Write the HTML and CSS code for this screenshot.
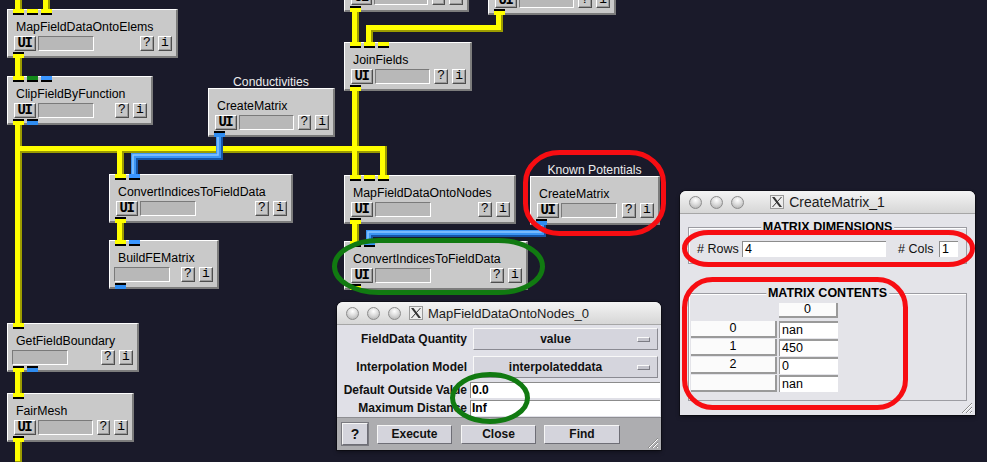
FILE: index.html
```html
<!DOCTYPE html>
<html>
<head>
<meta charset="utf-8">
<title>SCIRun network</title>
<link rel="stylesheet" href="styles.css">
</head>
<body>
<div class="canvas">
  <svg class="wires" width="987" height="462" viewBox="0 0 987 462">
    <path class="w-yd" d="M18.5 0V11 M46.5 0V11 M18.5 56V78 M18.5 123V325 M18.5 149.5H383.5V177 M120.5 149.5V176 M120.5 221V242 M18.5 370V395 M18.5 441V462 M355.5 10V44 M499.5 13V28.5H369.5V44 M355.5 88V177 M355.5 222V243"/>
    <path class="w-yl" d="M18.5 0V11 M46.5 0V11 M18.5 56V78 M18.5 123V325 M18.5 149.5H383.5V177 M120.5 149.5V176 M120.5 221V242 M18.5 370V395 M18.5 441V462 M355.5 10V44 M499.5 13V28.5H369.5V44 M355.5 88V177 M355.5 222V243"/>
    <path class="w-bd" d="M219.5 135V156.5H134.5V176 M542.5 223V233.5H369.5V243"/>
    <path class="w-bl" d="M219.5 135V156.5H134.5V176 M542.5 223V233.5H369.5V243"/>
    <path class="w-bc" d="M219.5 135V156.5H134.5V176 M542.5 223V233.5H369.5V243"/>
  </svg>

  <!-- partially visible modules at top -->
  <div class="mod m-n1">
    <div class="title">&nbsp;</div>
    <div class="row"><span class="ui">UI</span><span class="bar"></span><span class="sp"></span><span class="mb">?</span><span class="mb">i</span></div>
    <span class="port out p1 yel"></span>
  </div>
  <div class="mod m-n2">
    <div class="title">&nbsp;</div>
    <div class="row"><span class="ui">UI</span><span class="bar"></span><span class="sp"></span><span class="mb">?</span><span class="mb">i</span></div>
    <span class="port out p1 yel"></span>
  </div>

  <div class="mod m-elems">
    <span class="port in p1 yel"></span><span class="port in p2 yel"></span><span class="port in p3 yel"></span>
    <div class="title">MapFieldDataOntoElems</div>
    <div class="row"><span class="ui">UI</span><span class="bar"></span><span class="sp"></span><span class="mb">?</span><span class="mb">i</span></div>
    <span class="port out p1 yel"></span>
  </div>

  <div class="mod m-clip">
    <span class="port in p1 yel"></span><span class="port in p2 grn"></span><span class="port in p3 blu"></span>
    <div class="title">ClipFieldByFunction</div>
    <div class="row"><span class="ui">UI</span><span class="bar"></span><span class="sp"></span><span class="mb">?</span><span class="mb">i</span></div>
    <span class="port out p1 yel"></span><span class="port out p2 blu"></span>
  </div>

  <div class="mod m-cond">
    <div class="cap">Conductivities</div>
    <div class="title">CreateMatrix</div>
    <div class="row"><span class="ui">UI</span><span class="bar"></span><span class="sp"></span><span class="mb">?</span><span class="mb">i</span></div>
    <span class="port out p1 blu"></span>
  </div>

  <div class="mod m-join">
    <span class="port in p1 yel"></span><span class="port in p2 yel"></span><span class="port in p3 yel"></span>
    <div class="title">JoinFields</div>
    <div class="row"><span class="ui">UI</span><span class="bar"></span><span class="sp"></span><span class="mb">?</span><span class="mb">i</span></div>
    <span class="port out p1 yel"></span>
  </div>

  <div class="mod m-cifd1">
    <span class="port in p1 yel"></span><span class="port in p2 blu"></span>
    <div class="title">ConvertIndicesToFieldData</div>
    <div class="row"><span class="ui">UI</span><span class="bar"></span><span class="sp"></span><span class="mb">?</span><span class="mb">i</span></div>
    <span class="port out p1 yel"></span>
  </div>

  <div class="mod m-mapn">
    <span class="port in p1 yel"></span><span class="port in p2 yel"></span><span class="port in p3 yel"></span>
    <div class="title">MapFieldDataOntoNodes</div>
    <div class="row"><span class="ui">UI</span><span class="bar"></span><span class="sp"></span><span class="mb">?</span><span class="mb">i</span></div>
    <span class="port out p1 yel"></span>
  </div>

  <div class="mod m-known">
    <div class="cap">Known Potentials</div>
    <div class="title">CreateMatrix</div>
    <div class="row"><span class="ui">UI</span><span class="bar"></span><span class="sp"></span><span class="mb">?</span><span class="mb">i</span></div>
    <span class="port out p1 blu"></span>
  </div>

  <div class="mod m-bfe noui">
    <span class="port in p1 yel"></span><span class="port in p2 blu"></span>
    <div class="title">BuildFEMatrix</div>
    <div class="row"><span class="bar"></span><span class="sp"></span><span class="mb">?</span><span class="mb">i</span></div>
    <span class="port out p1 blu"></span>
  </div>

  <div class="mod m-cifd2">
    <span class="port in p1 yel"></span><span class="port in p2 blu"></span>
    <div class="title">ConvertIndicesToFieldData</div>
    <div class="row"><span class="ui">UI</span><span class="bar"></span><span class="sp"></span><span class="mb">?</span><span class="mb">i</span></div>
    <span class="port out p1 yel"></span>
  </div>

  <div class="mod m-gfb noui">
    <span class="port in p1 yel"></span>
    <div class="title">GetFieldBoundary</div>
    <div class="row"><span class="bar"></span><span class="sp"></span><span class="mb">?</span><span class="mb">i</span></div>
    <span class="port out p1 yel"></span><span class="port out p2 blu"></span>
  </div>

  <div class="mod m-fair">
    <span class="port in p1 yel"></span>
    <div class="title">FairMesh</div>
    <div class="row"><span class="ui">UI</span><span class="bar"></span><span class="sp"></span><span class="mb">?</span><span class="mb">i</span></div>
    <span class="port out p1 yel"></span>
  </div>

  <!-- MapFieldDataOntoNodes_0 window -->
  <div class="win w-map">
    <div class="tbar">
      <div class="lights"><i></i><i></i><i></i></div>
      <div class="tt">
        <svg class="xicon" width="14" height="14" viewBox="0 0 14 14"><rect x="0.5" y="0.5" width="13" height="13" fill="#ececec" stroke="#9a9a9a"/><polygon points="2,2 4.5,2 12,12 9.5,12" fill="#333"/><line x1="11.5" y1="2" x2="2.5" y2="12" stroke="#333" stroke-width="1"/></svg>
        <span class="ttext t13">MapFieldDataOntoNodes_0</span>
      </div>
      <div></div>
    </div>
    <div class="mapbody">
      <div class="frow r1"><span class="flabel">FieldData Quantity</span><span class="menub"><span class="mtext">value</span><span class="ind"></span></span></div>
      <div class="frow r2"><span class="flabel">Interpolation Model</span><span class="menub"><span class="mtext">interpolateddata</span><span class="ind"></span></span></div>
      <div class="frow r3"><span class="flabel">Default Outside Value</span><span class="entry">0.0</span></div>
      <div class="frow r4"><span class="flabel">Maximum Distance</span><span class="entry">Inf</span></div>
    </div>
    <div class="btnbar">
      <span class="wbtn qbtn">?</span>
      <span class="wbtn b-exe">Execute</span>
      <span class="wbtn b-close">Close</span>
      <span class="wbtn b-find">Find</span>
    </div>
    <svg class="grip" width="13" height="13" viewBox="0 0 13 13"><path d="M12 2L2 12M12 6L6 12M12 10L10 12" stroke="#8a8a8a" stroke-width="1"/><path d="M12 3L3 12M12 7L7 12M12 11L11 12" stroke="#fff" stroke-width="1"/></svg>
  </div>

  <!-- CreateMatrix_1 window -->
  <div class="win w-cm">
    <div class="tbar">
      <div class="lights"><i></i><i></i><i></i></div>
      <div class="tt">
        <svg class="xicon" width="14" height="14" viewBox="0 0 14 14"><rect x="0.5" y="0.5" width="13" height="13" fill="#ececec" stroke="#9a9a9a"/><polygon points="2,2 4.5,2 12,12 9.5,12" fill="#333"/><line x1="11.5" y1="2" x2="2.5" y2="12" stroke="#333" stroke-width="1"/></svg>
        <span class="ttext t14">CreateMatrix_1</span>
      </div>
      <div></div>
    </div>
    <div class="cmbody">
      <div class="frame f-dims">
        <span class="flegend">MATRIX DIMENSIONS</span>
        <div class="dimrow">
          <span class="lr"># Rows</span><span class="entry2 e-rows">4</span>
          <span class="lc"># Cols</span><span class="entry2 e-cols">1</span>
        </div>
      </div>
      <div class="frame f-cont">
        <span class="flegend">MATRIX CONTENTS</span>
        <div class="mgrid">
          <span class="blank"></span><span class="hcell">0</span>
          <span class="icell">0</span><span class="vcell">nan</span>
          <span class="icell">1</span><span class="vcell">450</span>
          <span class="icell">2</span><span class="vcell">0</span>
          <span class="icell"></span><span class="vcell">nan</span>
        </div>
      </div>
    </div>
    <svg class="grip" width="13" height="13" viewBox="0 0 13 13"><path d="M12 2L2 12M12 6L6 12M12 10L10 12" stroke="#8a8a8a" stroke-width="1"/><path d="M12 3L3 12M12 7L7 12M12 11L11 12" stroke="#fff" stroke-width="1"/></svg>
  </div>

  <!-- annotation marks -->
  <svg class="marks" width="987" height="462" viewBox="0 0 987 462">
    <rect class="mk-red" x="525.5" y="152.5" width="138" height="81" rx="34" ry="30"/>
    <rect class="mk-grn" x="334.5" y="240.5" width="208" height="52" rx="44" ry="26"/>
    <ellipse class="mk-grn" cx="490" cy="398" rx="37.5" ry="23.5"/>
    <rect class="mk-red" x="684.5" y="232.5" width="288" height="32" rx="24" ry="16"/>
    <rect class="mk-red" x="684.5" y="279.5" width="221" height="128" rx="28" ry="28"/>
  </svg>
</div>
</body>
</html>
```

FILE: styles.css
```css
html, body {
  margin: 0;
  padding: 0;
}
body {
  background: #1a1a2a;
  font-family: "Liberation Sans", Arial, sans-serif;
}
.canvas {
  position: relative;
  width: 987px;
  height: 462px;
  overflow: hidden;
  background: #1a1a2a;
}

/* wires */
.wires, .marks {
  position: absolute;
  left: 0;
  top: 0;
}
.wires path { fill: none; stroke-linecap: butt; stroke-linejoin: miter; }
.w-yd { stroke: #9c9c00; stroke-width: 7; }
.w-yl { stroke: #ffff00; stroke-width: 5; transform: translate(-1px, -1px); }
.w-bd { stroke: #1656a8; stroke-width: 7; }
.w-bl { stroke: #3b96f5; stroke-width: 5; transform: translate(-1px, -1px); }
.w-bc { stroke: #8cc6ff; stroke-width: 1.5; transform: translate(-1.5px, -1.5px); }

.marks { z-index: 20; pointer-events: none; }
.marks rect, .marks ellipse { fill: none; stroke-width: 5; }
.mk-red { stroke: #f70d12; }
.mk-grn { stroke: #117a11; }

/* modules */
.mod {
  position: absolute;
  box-sizing: border-box;
  height: 49px;
  background: #c9c9c9;
  border-style: solid;
  border-width: 1px 2px 2px 1px;
  border-color: #ffffff #7c7c7c #7c7c7c #ffffff;
  padding: 0 4px 0 6px;
  display: flex;
  flex-direction: column;
  z-index: 2;
}
.mod .title {
  font-size: 12.3px;
  line-height: 16px;
  padding: 9px 0 0 2px;
  color: #000;
  white-space: nowrap;
}
.mod .row {
  display: flex;
  align-items: center;
  height: 15px;
  margin-top: 1px;
}
.ui, .mb {
  box-sizing: border-box;
  height: 15px;
  background: #c6c6c6;
  border: 1px solid;
  border-color: #ffffff #4e4e4e #4e4e4e #ffffff;
  box-shadow: inset -1px -1px 0 #9a9a9a;
  font-family: "Liberation Mono", "Courier New", monospace;
  font-size: 13px;
  line-height: 12px;
  text-align: center;
  color: #000;
}
.ui { width: 22px; font-weight: bold; font-size: 14px; letter-spacing: -1.5px; padding-right: 1px; }
.mb { width: 14px; margin-left: 4px; }
.bar {
  box-sizing: border-box;
  width: 56px;
  height: 15px;
  margin-left: 2px;
  background: #b8b8b8;
  border: 1px solid;
  border-color: #7a7a7a #ffffff #ffffff #7a7a7a;
}
.noui .bar { margin-left: -2px; }
.sp { flex: 1; }

.cap {
  position: absolute;
  bottom: 100%;
  left: -10px;
  right: -10px;
  text-align: center;
  color: #ececec;
  font-size: 12.2px;
  line-height: 14px;
  white-space: nowrap;
}

/* ports */
.port { position: absolute; width: 11px; height: 6px; }
.port.in { top: -1px; }
.port.out { bottom: -2px; }
.p1 { left: 5px; }
.p2 { left: 19px; }
.p3 { left: 33px; }
.port.in.yel { background: linear-gradient(#ffff00 0 4px, #000 4px 6px); }
.port.in.grn { background: linear-gradient(#13891a 0 4px, #000 4px 6px); }
.port.in.blu { background: linear-gradient(#3a96ff 0 4px, #000 4px 6px); }
.port.out.yel { background: linear-gradient(#000 0 2px, #ffff00 2px 6px); }
.port.out.blu { background: linear-gradient(#000 0 2px, #2f8cf0 2px 6px); }

/* module placement on the canvas */
.m-n1 { left: 344px; top: -37px; width: 125px; }
.m-n2 { left: 488px; top: -34px; width: 128px; }
.m-elems { left: 7px; top: 9px; width: 171px; }
.m-clip { left: 7px; top: 76px; width: 146px; }
.m-cond { left: 208px; top: 88px; width: 127px; }
.m-join { left: 344px; top: 42px; width: 128px; }
.m-cifd1 { left: 109px; top: 174px; width: 184px; }
.m-mapn { left: 344px; top: 175px; width: 172px; }
.m-known { left: 530px; top: 176px; width: 130px; }
.m-bfe { left: 109px; top: 240px; width: 110px; }
.m-cifd2 { left: 344px; top: 241px; width: 184px; }
.m-gfb { left: 7px; top: 323px; width: 132px; }
.m-fair { left: 7px; top: 393px; width: 127px; }

/* windows */
.win {
  position: absolute;
  box-sizing: border-box;
  border-radius: 6px 6px 0 0;
  overflow: hidden;
  z-index: 5;
  box-shadow: 0 0 0 1px rgba(0, 0, 0, 0.35), 0 2px 4px rgba(0, 0, 0, 0.4);
}
.w-map { left: 337px; top: 302px; width: 324px; height: 148px; background: #e0e0e7; }
.w-cm { left: 680px; top: 191px; width: 295px; height: 224px; background: #e4e4e9; }

.tbar {
  height: 23px;
  box-sizing: border-box;
  display: grid;
  grid-template-columns: 1fr auto 1fr;
  align-items: center;
  background: linear-gradient(#f4f4f4, #d6d6d6);
  border-bottom: 1px solid #a6a6a6;
}
.lights {
  display: flex;
  gap: 8px;
  padding-left: 9px;
}
.lights i {
  display: block;
  width: 13px;
  height: 13px;
  box-sizing: border-box;
  border-radius: 50%;
  border: 1px solid #8c8c8c;
  background: radial-gradient(circle at 50% 30%, #ffffff 0, #dcdcdc 45%, #a9a9a9 100%);
}
.tt {
  display: flex;
  align-items: center;
  gap: 5px;
}
.xicon { display: block; }
.ttext { color: #1b1b1b; white-space: nowrap; }
.t13 { font-size: 13px; }
.t14 { font-size: 14px; }

/* MapFieldDataOntoNodes_0 body */
.mapbody {
  display: flex;
  flex-direction: column;
  padding-top: 3px;
}
.frow { display: flex; align-items: center; }
.r1, .r2 { height: 22px; }
.r2 { margin-top: 6px; }
.r3 { height: 16px; margin-top: 4px; }
.r4 { height: 16px; margin-top: 2px; }
.flabel {
  width: 130px;
  flex: none;
  text-align: right;
  font-size: 12px;
  font-weight: bold;
  color: #111;
  white-space: nowrap;
}
.menub {
  box-sizing: border-box;
  display: flex;
  align-items: center;
  width: 185px;
  height: 22px;
  margin-left: 6px;
  background: #d5d5dd;
  border: 1px solid;
  border-color: #f8f8f8 #8a8a92 #8a8a92 #f8f8f8;
}
.mtext {
  flex: 1;
  text-align: center;
  font-size: 12px;
  font-weight: bold;
  color: #111;
}
.ind {
  width: 13px;
  height: 5px;
  box-sizing: border-box;
  margin-right: 7px;
  background: #c4c4cc;
  border: 1px solid;
  border-color: #fafafa #7c7c84 #7c7c84 #fafafa;
}
.entry {
  box-sizing: border-box;
  width: 190px;
  height: 16px;
  margin-left: 3px;
  padding-left: 1px;
  background: #ffffff;
  border-top: 1px solid #8c8c8c;
  border-left: 1px solid #8c8c8c;
  font-size: 12px;
  font-weight: bold;
  line-height: 15px;
  color: #000;
}
.btnbar {
  display: flex;
  align-items: center;
  height: 33px;
  margin-top: 1px;
  padding-left: 5px;
  background: #adadb0;
  border-top: 1px solid #8e8e92;
  box-sizing: border-box;
}
.wbtn {
  box-sizing: border-box;
  height: 19px;
  width: 75px;
  display: flex;
  align-items: center;
  justify-content: center;
  background: #d4d4dc;
  border: 1px solid;
  border-color: #f6f6f6 #6e6e76 #6e6e76 #f6f6f6;
  font-size: 12px;
  font-weight: bold;
  color: #111;
}
.qbtn {
  width: 26px;
  height: 22px;
  box-shadow: 0 0 0 1px #7a7a80;
  font-size: 14px;
}
.b-exe { margin-left: 9px; }
.b-close { margin-left: 9px; }
.b-find { margin-left: 8px; width: 76px; }

.grip {
  position: absolute;
  right: 2px;
  bottom: 1px;
}

/* CreateMatrix_1 body */
.cmbody {
  padding: 0 8px;
  display: flex;
  flex-direction: column;
}
.frame {
  position: relative;
  box-sizing: border-box;
  border: 1px solid #9c9ca2;
  box-shadow: inset 1px 1px 0 #ffffff;
}
.f-dims { margin-top: 13px; height: 37px; }
.f-cont { margin-top: 29px; height: 108px; }
.flegend {
  position: absolute;
  top: -8px;
  left: 50%;
  transform: translateX(-50%);
  padding: 0 2px;
  background: #e4e4e9;
  font-size: 12.5px;
  font-weight: bold;
  line-height: 15px;
  color: #000;
  white-space: nowrap;
}
.dimrow {
  display: flex;
  align-items: center;
  height: 16px;
  margin-top: 13px;
  padding-left: 8px;
  font-size: 12.5px;
  color: #111;
}
.lr { width: 45px; white-space: nowrap; }
.lc { width: 41px; margin-left: 12px; white-space: nowrap; }
.entry2 {
  box-sizing: border-box;
  height: 16px;
  padding-left: 2px;
  background: #ffffff;
  border-top: 1px solid #8c8c8c;
  border-left: 1px solid #8c8c8c;
  font-size: 12.5px;
  line-height: 15px;
  color: #000;
}
.e-rows { width: 144px; }
.e-cols { width: 19px; }

.mgrid {
  display: grid;
  grid-template-columns: 86px 59px;
  grid-template-rows: 17px repeat(4, 17px);
  column-gap: 2px;
  row-gap: 1px;
  padding: 9px 0 0 2px;
  font-size: 12.5px;
  color: #000;
}
.hcell, .icell {
  box-sizing: border-box;
  background: #fbfbfb;
  border-right: 2px solid #9a9a9a;
  border-bottom: 2px solid #9a9a9a;
  text-align: center;
  line-height: 15px;
}
.hcell { height: 15px; line-height: 13px; }
.vcell {
  box-sizing: border-box;
  background: #ffffff;
  border-top: 2px solid #9a9a9a;
  border-left: 1px solid #9a9a9a;
  padding-left: 2px;
  line-height: 14px;
}
```
